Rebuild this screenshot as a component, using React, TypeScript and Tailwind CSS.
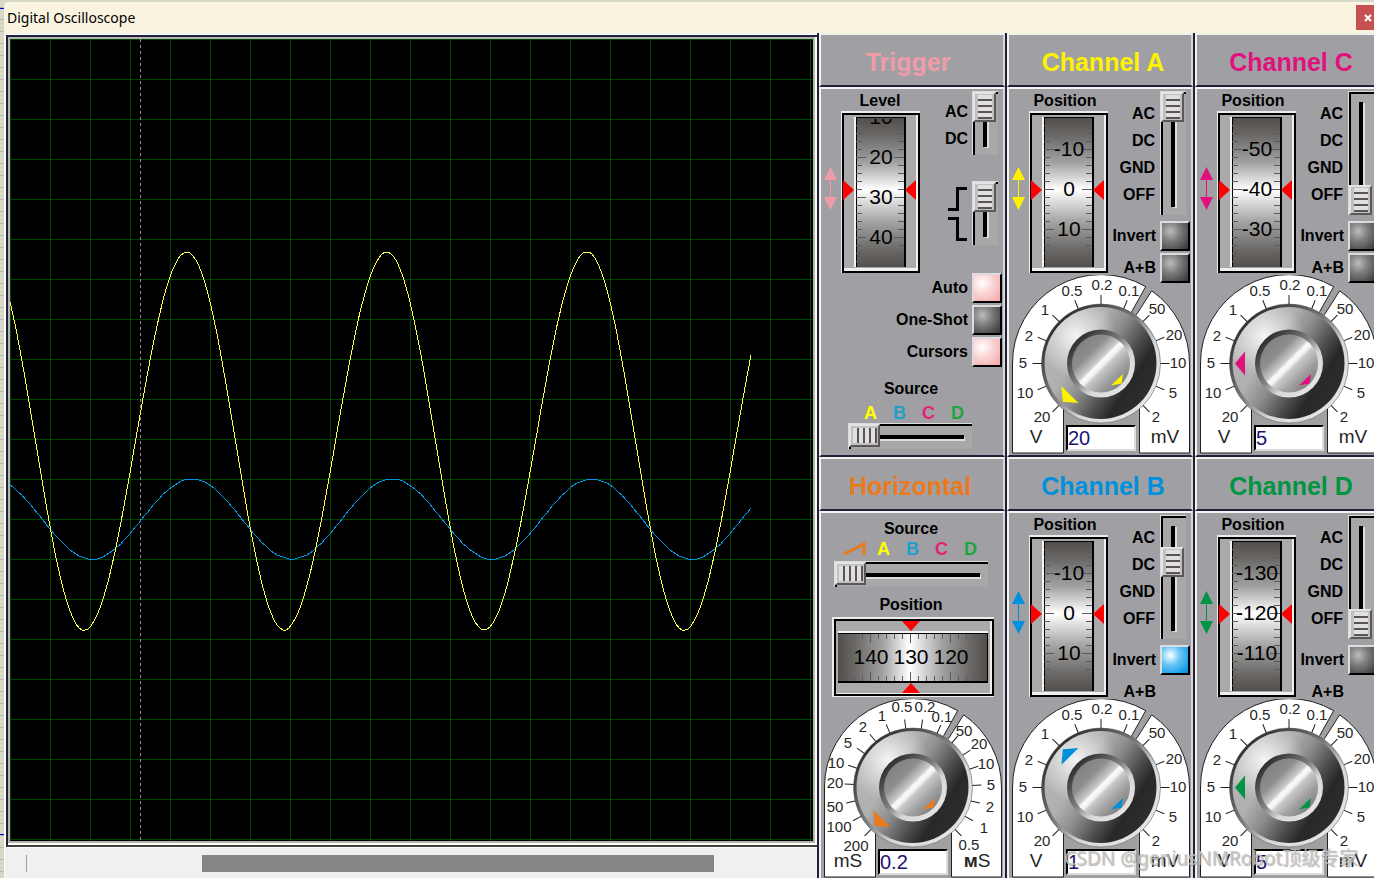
import { useId, useState } from "react";
import type { ReactNode } from "react";
import clsx from "clsx";

type Led = "off" | "pink" | "blue";

interface Mark {
  text: string;
  x: number;
  y: number;
  angle: number;
}

interface ChannelProps {
  name: string;
  color: string;
  wheel: number[];
  coupling: number;
  pointer: number;
  volts: string;
  inverted?: boolean;
  canSum?: boolean;
}

const YELLOW = "#fff200";
const BLUE = "#0090dc";
const MAGENTA = "#e0107c";
const GREEN = "#009444";
const ORANGE = "#ea7a1c";
const PINK = "#f09ca8";

const voltMarks: Mark[] = [
  { text: "20", x: 30, y: 142, angle: -135 },
  { text: "10", x: 13, y: 118, angle: -112.5 },
  { text: "5", x: 11, y: 88, angle: -90 },
  { text: "2", x: 17, y: 61, angle: -67.5 },
  { text: "1", x: 33, y: 35, angle: -45 },
  { text: "0.5", x: 60, y: 16, angle: -22.5 },
  { text: "0.2", x: 90, y: 10, angle: 0 },
  { text: "0.1", x: 117, y: 16, angle: 22.5 },
  { text: "50", x: 145, y: 34, angle: 45 },
  { text: "20", x: 162, y: 60, angle: 67.5 },
  { text: "10", x: 166, y: 88, angle: 90 },
  { text: "5", x: 161, y: 118, angle: 112.5 },
  { text: "2", x: 144, y: 142, angle: 135 },
];

const timeMarks: Mark[] = [
  { text: "200", x: 32, y: 147, angle: -135 },
  { text: "100", x: 15, y: 128, angle: -119 },
  { text: "50", x: 11, y: 108, angle: -103 },
  { text: "20", x: 11, y: 84, angle: -87 },
  { text: "10", x: 12, y: 64, angle: -71 },
  { text: "5", x: 24, y: 44, angle: -55 },
  { text: "2", x: 39, y: 28, angle: -39 },
  { text: "1", x: 58, y: 17, angle: -23 },
  { text: "0.5", x: 78, y: 8, angle: -7 },
  { text: "0.2", x: 101, y: 8, angle: 8 },
  { text: "0.1", x: 118, y: 18, angle: 24 },
  { text: "50", x: 140, y: 32, angle: 41 },
  { text: "20", x: 155, y: 45, angle: 57 },
  { text: "10", x: 162, y: 65, angle: 72 },
  { text: "5", x: 167, y: 86, angle: 88 },
  { text: "2", x: 166, y: 108, angle: 103 },
  { text: "1", x: 160, y: 129, angle: 119 },
  { text: "0.5", x: 145, y: 146, angle: 135 },
];

function wave(mid: number, amp: number, peak: number, fall: number) {
  const points: string[] = [];
  for (let x = 0; x <= 741; x += 3) {
    const t = (((x - peak) % 200) + 200) % 200;
    const phase = t < fall ? t / fall / 2 : 0.5 + (t - fall) / (200 - fall) / 2;
    points.push(`${x},${Math.round(mid - amp * Math.cos(phase * 2 * Math.PI))}`);
  }
  return points.join(" ");
}

function Screen() {
  return (
    <div className="flex min-h-0 flex-1 border-t border-l border-white">
      <div className="flex flex-1 border-t-2 border-l-2 border-b-2 border-t-[#20203a] border-l-[#20203a] border-b-[#404040]">
        <div className="flex flex-1 border-r-2 border-b-2 border-[#fffdf4]">
          <div className="flex flex-1 border-2 border-[#b4b4b4]">
            <svg className="h-full w-full bg-black" role="img" aria-label="Traces" shapeRendering="crispEdges">
              <defs>
                <pattern id="graticule" width="40" height="40" patternUnits="userSpaceOnUse">
                  <path d="M0.5 0V40M0 0.5H40" stroke="#004600" fill="none" />
                </pattern>
              </defs>
              <rect width="100%" height="100%" fill="url(#graticule)" />
              <line x1="130.5" x2="130.5" y1="0" y2="100%" stroke="#909090" strokeDasharray="3 3" />
              <polyline points={wave(480, 40, 182, 100)} fill="none" stroke="#0096e6" />
              <polyline points={wave(402, 189, 177, 97)} fill="none" stroke="#ffff50" />
            </svg>
          </div>
        </div>
      </div>
    </div>
  );
}

function Panel({ title, color, shift, children }: { title: string; color: string; shift: string; children: ReactNode }) {
  return (
    <section className="flex h-[424px] shrink-0 flex-col">
      <header
        className={clsx(
          "flex h-[54px] shrink-0 items-center justify-center border-2 border-t-[#eef4ea] border-r-[#d8d8d8] border-b-[#20203a] border-l-[#f4f4ee] pt-1",
          shift
        )}
      >
        <h2 className="text-[25px] leading-7 font-bold" style={{ color }}>
          {title}
        </h2>
      </header>
      <div className="min-h-0 flex-1 border-2 border-t-[#f4f4ee] border-r-[#d8d8d8] border-b-[#20203a] border-l-[#f4f4ee] pr-px pl-[3px]">
        {children}
      </div>
    </section>
  );
}

function LedButton({ label, led }: { label: string; led: Led }) {
  const [pressed, setPressed] = useState(led !== "off");
  return (
    <button
      type="button"
      aria-label={label}
      aria-pressed={pressed}
      onClick={() => setPressed(!pressed)}
      className={clsx(
        "size-[30px] shrink-0 border-2 border-t-[#dcdcdc] border-r-black border-b-black border-l-[#dcdcdc]",
        led === "off" && "bg-[radial-gradient(circle_at_32%_32%,#bdbdbd,#7c7c7c_40%,#383838_95%)]",
        led === "pink" && "bg-[radial-gradient(circle_at_32%_32%,#ffffff,#fbd2d2_45%,#f4a4a4_100%)]",
        led === "blue" && "bg-[radial-gradient(circle_at_32%_32%,#ffffff,#66c4f6_40%,#0090e4_95%)]"
      )}
    />
  );
}

function LedRow({ label, led }: { label: string; led?: Led }) {
  return (
    <div className="flex h-[30px] items-center justify-end gap-1">
      <span>{label}</span>
      {led ? <LedButton label={label} led={led} /> : <span className="w-[30px] shrink-0" />}
    </div>
  );
}

function VSlider({ label, steps, value, size }: { label: string; steps: number; value: number; size: string }) {
  return (
    <div className={clsx("relative mr-1 w-[26px] shrink-0 border-t border-l border-[#dcdcdc] bg-[#a8a8a8]", size)}>
      <div className="h-full border-t-2 border-l-2 border-black px-2 py-2">
        <div className="h-full w-1 bg-black shadow-[2px_1px_0_#dedede]" />
      </div>
      <input
        type="range"
        aria-label={label}
        min={0}
        max={steps - 1}
        defaultValue={value}
        className="absolute inset-0 m-0 h-full w-[23px] appearance-none bg-transparent [writing-mode:vertical-lr] [&::-webkit-slider-thumb]:h-[30px] [&::-webkit-slider-thumb]:w-[23px] [&::-webkit-slider-thumb]:appearance-none [&::-webkit-slider-thumb]:border-2 [&::-webkit-slider-thumb]:border-t-[#e4e4e4] [&::-webkit-slider-thumb]:border-r-[#5c5858] [&::-webkit-slider-thumb]:border-b-[#5c5858] [&::-webkit-slider-thumb]:border-l-[#e4e4e4] [&::-webkit-slider-thumb]:bg-[#c0c0c0] [&::-webkit-slider-thumb]:bg-[repeating-linear-gradient(180deg,#e0e0e0_0_4px,#5c5454_4px_6px)] [&::-webkit-slider-thumb]:bg-[length:14px_24px] [&::-webkit-slider-thumb]:bg-center [&::-webkit-slider-thumb]:bg-no-repeat"
      />
    </div>
  );
}

function HSlider({ label, steps, size }: { label: string; steps: number; size: string }) {
  return (
    <div className={clsx("relative h-[26px] border-t border-l border-[#dcdcdc] bg-[#a8a8a8]", size)}>
      <div className="h-full border-t-2 border-l-2 border-black px-2 py-[9px]">
        <div className="h-1 w-full bg-black shadow-[1px_2px_0_#dedede]" />
      </div>
      <input
        type="range"
        aria-label={label}
        min={0}
        max={steps - 1}
        defaultValue={0}
        className="absolute inset-0 m-0 h-[23px] w-full appearance-none bg-transparent [&::-webkit-slider-thumb]:h-[23px] [&::-webkit-slider-thumb]:w-[31px] [&::-webkit-slider-thumb]:appearance-none [&::-webkit-slider-thumb]:border-2 [&::-webkit-slider-thumb]:border-t-[#e4e4e4] [&::-webkit-slider-thumb]:border-r-[#5c5858] [&::-webkit-slider-thumb]:border-b-[#5c5858] [&::-webkit-slider-thumb]:border-l-[#e4e4e4] [&::-webkit-slider-thumb]:bg-[#c0c0c0] [&::-webkit-slider-thumb]:bg-[repeating-linear-gradient(90deg,#e0e0e0_0_4px,#5c5454_4px_6px)] [&::-webkit-slider-thumb]:bg-[length:24px_15px] [&::-webkit-slider-thumb]:bg-center [&::-webkit-slider-thumb]:bg-no-repeat"
      />
    </div>
  );
}

// numbers are 40px apart, the one at values.length / 2 sits on the center line
function VWheel({ label, values, center = 78 }: { label: string; values: number[]; center?: number }) {
  const id = useId();
  const start = center - 40 * Math.floor(values.length / 2);
  const ticks: number[] = [];
  for (let y = center - 80; y < 156; y += 8) {
    if (y > 6) ticks.push(y);
  }
  return (
    <div className="relative">
      <svg width="80" height="162" className="block">
        <defs>
          <linearGradient id={`${id}g`} x1="0" y1="0" x2="0" y2="1">
            <stop offset="0" stopColor="#524e4c" />
            <stop offset="0.12" stopColor="#6c6a68" />
            <stop offset="0.3" stopColor="#a2a2a2" />
            <stop offset="0.48" stopColor="#ffffff" />
            <stop offset="0.7" stopColor="#a2a2a2" />
            <stop offset="0.88" stopColor="#6c6a68" />
            <stop offset="1" stopColor="#524e4c" />
          </linearGradient>
          <clipPath id={`${id}c`}>
            <rect x="16" y="8" width="50" height="147" />
          </clipPath>
        </defs>
        <g shapeRendering="crispEdges">
          <rect x="1" y="0" width="79" height="162" fill="#ececec" />
          <rect x="2" y="2" width="78" height="160" fill="#000" />
          <rect x="4" y="4" width="74" height="156" fill="#f0f0f0" />
          <rect x="4" y="4" width="72" height="153" fill="#aaaaaa" />
          <rect x="14" y="6" width="2" height="150" fill="#f4f4f4" />
          <rect x="16" y="6" width="50" height="150" fill="#000" />
          <rect x="17" y="7" width="47" height="149" fill={`url(#${id}g)`} />
          {ticks.map((y) => {
            const len = (y - center) % 40 === 0 ? 10 : 6;
            return <path key={y} d={`M16 ${y + 0.5}h${len}M64 ${y + 0.5}h-${len}`} stroke="#5a5a5a" />;
          })}
        </g>
        <path d="M3 69V89L14 79ZM76 69V89L65 79Z" fill="#ff0000" />
        <g clipPath={`url(#${id}c)`} fontSize="21" textAnchor="middle">
          {values.map((v, i) => (
            <text key={v} x="41" y={start + i * 40 + 7}>
              {v}
            </text>
          ))}
        </g>
      </svg>
      <input type="range" aria-label={label} min={-200} max={200} className="absolute inset-0 h-full w-full opacity-0" />
    </div>
  );
}

function HWheel({ label, values }: { label: string; values: number[] }) {
  const id = useId();
  const ticks = Array.from({ length: 17 }, (_, i) => 15 + i * 8);
  return (
    <div className="relative">
      <svg width="162" height="80" className="block">
        <defs>
          <linearGradient id={id}>
            <stop offset="0" stopColor="#524e4c" />
            <stop offset="0.12" stopColor="#6c6a68" />
            <stop offset="0.3" stopColor="#a2a2a2" />
            <stop offset="0.48" stopColor="#ffffff" />
            <stop offset="0.7" stopColor="#a2a2a2" />
            <stop offset="0.88" stopColor="#6c6a68" />
            <stop offset="1" stopColor="#524e4c" />
          </linearGradient>
        </defs>
        <g shapeRendering="crispEdges">
          <rect width="162" height="80" fill="#ececec" />
          <rect x="2" y="2" width="160" height="77" fill="#000" />
          <rect x="4" y="4" width="156" height="73" fill="#f0f0f0" />
          <rect x="4" y="4" width="154" height="72" fill="#aaaaaa" />
          <rect x="6" y="14" width="150" height="2" fill="#f4f4f4" />
          <rect x="6" y="16" width="150" height="50" fill="#000" />
          <rect x="6" y="17" width="149" height="47" fill={`url(#${id})`} />
          {ticks.map((x) => {
            const len = (x - 79) % 40 === 0 ? 9 : 5;
            return <path key={x} d={`M${x - 0.5} 17v${len}M${x - 0.5} 64v-${len}`} stroke="#5a5a5a" />;
          })}
        </g>
        <path d="M70 4H88L79 14ZM70 76H88L79 66Z" fill="#ff0000" />
        <g fontSize="21" textAnchor="middle">
          {values.map((v, i) => (
            <text key={v} x={39 + i * 40} y="47">
              {v}
            </text>
          ))}
        </g>
      </svg>
      <input type="range" aria-label={label} min={0} max={200} className="absolute inset-0 h-full w-full opacity-0" />
    </div>
  );
}

interface DialProps {
  label: string;
  marks: Mark[];
  pointer: number;
  color: string;
  value: string;
  units: [ReactNode, ReactNode];
}

function Dial({ label, marks, pointer, color, value, units }: DialProps) {
  const id = useId();
  return (
    <div className="relative w-[178px]">
      <svg width="178" height="179" className="block">
        <defs>
          <linearGradient id={`${id}body`} x1="0.1" y1="0.2" x2="0.9" y2="0.72">
            <stop offset="0" stopColor="#b4b4b4" />
            <stop offset="0.3" stopColor="#b0b0b0" />
            <stop offset="0.5" stopColor="#8c8c8c" />
            <stop offset="0.72" stopColor="#4c4c4c" />
            <stop offset="0.86" stopColor="#282828" />
            <stop offset="1" stopColor="#2c2c2c" />
          </linearGradient>
          <radialGradient id={`${id}shine`} cx="0.28" cy="0.26" r="0.36">
            <stop offset="0" stopColor="#f4f4f4" />
            <stop offset="1" stopColor="#f4f4f4" stopOpacity="0" />
          </radialGradient>
          <linearGradient id={`${id}rim`} x1="0.15" y1="0.15" x2="0.85" y2="0.85">
            <stop offset="0" stopColor="#303030" />
            <stop offset="0.45" stopColor="#808080" />
            <stop offset="0.7" stopColor="#d8d8d8" />
            <stop offset="1" stopColor="#e4e4e4" />
          </linearGradient>
          <linearGradient id={`${id}cap`} x1="0.15" y1="0.15" x2="0.85" y2="0.85">
            <stop offset="0" stopColor="#828282" />
            <stop offset="0.24" stopColor="#8e8e8e" />
            <stop offset="0.36" stopColor="#b4b4b4" />
            <stop offset="0.43" stopColor="#c8c8c8" />
            <stop offset="0.48" stopColor="#fafafa" />
            <stop offset="0.54" stopColor="#f4f4f4" />
            <stop offset="0.6" stopColor="#c8c8c8" />
            <stop offset="0.8" stopColor="#a0a0a0" />
            <stop offset="1" stopColor="#848484" />
          </linearGradient>
        </defs>
        <path
          d="M0.5 178V89A88.5 88.5 0 0 1 133.7 11.7L119.7 36.7L89 88L51.5 134V178Z M139.7 15.8A88.5 88.5 0 0 1 177.5 89V178H127.5V134L89 88L124.7 39.3Z"
          fill="#fff"
          stroke="#202020"
        />
        {marks.map((m) => (
          <line key={m.angle} x1="89" y1="20" x2="89" y2="30" stroke="#202020" transform={`rotate(${m.angle} 89 88.5)`} />
        ))}
        <g fontSize="15" textAnchor="middle" fill="#262626">
          {marks.map((m) => (
            <text key={m.angle} x={m.x} y={m.y + 5}>
              {m.text}
            </text>
          ))}
        </g>
        <g fontSize="19" textAnchor="middle" fill="#262626">
          <text x="24" y="168">
            {units[0]}
          </text>
          <text x="153" y="168">
            {units[1]}
          </text>
        </g>
        <path d="M52 134V177H127V134Z" fill="#a0a0a0" />
        <circle cx="89" cy="88.5" r="59.5" fill={`url(#${id}rim)`} stroke="#4a4a4a" strokeWidth="0.5" />
        <circle cx="88.5" cy="88" r="56" fill={`url(#${id}body)`} />
        <circle cx="88.5" cy="88" r="56" fill={`url(#${id}shine)`} />
        <circle cx="89" cy="88.5" r="34" fill={`url(#${id}rim)`} />
        <circle cx="89" cy="88.5" r="29" fill={`url(#${id}cap)`} />
        <path d="M35 88.5L45 76.5V100.5Z" fill={color} transform={`rotate(${pointer} 89 88.5)`} />
        <path d="M111 99L109.5 108.5L99 110.5Z" fill={color} />
      </svg>
      <input
        type="range"
        aria-label={label}
        min={-135}
        max={135}
        className="absolute top-8 left-8 size-28 rounded-full opacity-0"
      />
      <input
        type="text"
        aria-label={`${label} value`}
        defaultValue={value}
        className="absolute bottom-[3px] left-[54px] h-[26px] w-[70px] border-2 border-t-black border-r-[#dcdcdc] border-b-[#dcdcdc] border-l-black bg-white text-xl leading-5 text-[#1c1470] outline-none"
      />
    </div>
  );
}

function ShiftArrow({ color }: { color: string }) {
  return (
    <div className="w-4 shrink-0 pt-[78px]">
      <svg width="13" height="44" fill={color}>
        <path d="M6.5 0L13 13H7V30H13L6.5 43L0 30H6V13H0Z" />
      </svg>
    </div>
  );
}

function Channel({ name, color, wheel, coupling, pointer, volts, inverted, canSum }: ChannelProps) {
  return (
    <Panel title={`Channel ${name}`} color={color} shift="pl-1.5">
      <div className="flex h-[186px]">
        <ShiftArrow color={color} />
        <div className="w-20 shrink-0">
          <h3 className="flex h-[22px] items-end justify-center pr-1.5">Position</h3>
          <VWheel label={`Channel ${name} position`} values={wheel} />
        </div>
        <div className="flex-1 pt-0.5">
          <div className="flex justify-end gap-1">
            <ul className="pt-[9px] pr-px text-right leading-[27px]">
              <li>AC</li>
              <li>DC</li>
              <li>GND</li>
              <li>OFF</li>
            </ul>
            <VSlider label={`Channel ${name} coupling`} steps={4} value={coupling} size="h-[124px]" />
          </div>
          <div className="mt-1.5 flex flex-col gap-0.5">
            <LedRow label="Invert" led={inverted ? "blue" : "off"} />
            <LedRow label="A+B" led={canSum ? "off" : undefined} />
          </div>
        </div>
      </div>
      <Dial
        label={`Channel ${name} gain`}
        marks={voltMarks}
        pointer={pointer}
        color={color}
        value={volts}
        units={["V", "mV"]}
      />
    </Panel>
  );
}

function SourceLetters() {
  return (
    <>
      <span className="w-[29px] text-center text-[#ffff00]">A</span>
      <span className="w-[29px] text-center text-[#1ea0c8]">B</span>
      <span className="w-[29px] text-center text-[#e81e78]">C</span>
      <span className="w-[29px] text-center text-[#1ea53c]">D</span>
    </>
  );
}

function Trigger() {
  return (
    <Panel title="Trigger" color={PINK} shift="pr-2">
      <div className="flex h-[184px]">
        <ShiftArrow color={PINK} />
        <div className="w-20 shrink-0">
          <h3 className="flex h-[22px] items-end justify-center">Level</h3>
          <VWheel label="Trigger level" values={[10, 20, 30, 40]} center={86} />
        </div>
        <div className="flex-1 pt-0.5">
          <div className="flex justify-end gap-1">
            <ul className="pt-[7px] text-right leading-[27px]">
              <li>AC</li>
              <li>DC</li>
            </ul>
            <VSlider label="Trigger coupling" steps={2} value={0} size="h-16" />
          </div>
          <div className="mt-[26px] flex items-center justify-end gap-1">
            <svg width="20" height="56" fill="none" stroke="#000" strokeWidth="3" shapeRendering="crispEdges">
              <path d="M19 3.5H9.5V24.5H0M0 33.5H9.5V54.5H19" />
            </svg>
            <VSlider label="Trigger edge" steps={2} value={0} size="h-16" />
          </div>
        </div>
      </div>
      <div className="flex flex-col gap-0.5">
        <LedRow label="Auto" led="pink" />
        <LedRow label="One-Shot" led="off" />
        <LedRow label="Cursors" led="pink" />
      </div>
      <h3 className="mt-3 pr-1 text-center leading-5">Source</h3>
      <div className="mt-1 ml-8 flex text-lg leading-5">
        <SourceLetters />
      </div>
      <div className="ml-6">
        <HSlider label="Trigger source" steps={4} size="w-[124px]" />
      </div>
    </Panel>
  );
}

function Horizontal() {
  return (
    <Panel title="Horizontal" color={ORANGE} shift="pr-1">
      <div className="h-[186px] pt-1.5">
        <h3 className="pr-1 text-center leading-5">Source</h3>
        <div className="ml-4 flex text-lg leading-5">
          <span className="flex w-[29px] items-center justify-center">
            <svg width="24" height="14" fill="none" stroke={ORANGE} strokeWidth="3">
              <path d="M1 12L21 2V13" />
            </svg>
          </span>
          <SourceLetters />
        </div>
        <div className="mt-0.5 ml-2.5">
          <HSlider label="Horizontal source" steps={5} size="w-[154px]" />
        </div>
        <h3 className="mt-2 pr-1 text-center leading-5">Position</h3>
        <div className="mt-0.5 ml-2">
          <HWheel label="Horizontal position" values={[140, 130, 120]} />
        </div>
      </div>
      <Dial
        label="Time base"
        marks={timeMarks}
        pointer={-45}
        color={ORANGE}
        value="0.2"
        units={[
          "mS",
          <>
            <tspan fontWeight="bold">м</tspan>S
          </>,
        ]}
      />
    </Panel>
  );
}

function Column({ children }: { children: ReactNode }) {
  return <div className="w-[188px] shrink-0 border-l-2 border-[#20203a] bg-[#a0a0a4]">{children}</div>;
}

export default function App() {
  return (
    <div className="relative flex h-screen flex-col overflow-hidden bg-[repeating-linear-gradient(180deg,#d8d8c8_0_7px,#b8b8b0_7px_8px,#d8d8c8_8px_12px)] pt-0.5 pl-1 font-['Liberation_Sans',Arial,sans-serif] text-black">
      <div className="absolute top-2 left-0 h-px w-1 bg-[#0000c8]" />
      <div className="absolute bottom-[43px] left-0 h-px w-1 bg-[#0000c8]" />
      <div className="flex h-[31px] shrink-0 items-center justify-between rounded-tl bg-[#faf3e0] pl-[3px]">
        <h1 className="font-['Noto_Sans',sans-serif] text-sm">Digital Oscilloscope</h1>
        <button
          type="button"
          aria-label="Close"
          className="flex h-[25px] w-[18px] items-center justify-end bg-[#c75050] pr-0.5"
        >
          <svg width="8" height="8" stroke="#fff" strokeWidth="2">
            <path d="M1 1L7 7M7 1L1 7" />
          </svg>
        </button>
      </div>
      <div className="flex min-h-0 flex-1 border-l border-[#fffdf0] bg-[#f0f0f0]">
        <main className="flex min-w-0 flex-1 flex-col pt-px">
          <Screen />
          <div className="flex h-[31px] shrink-0 items-center border-t border-white">
            <div className="ml-[21px] h-[17px] w-px bg-[#a0a0a0]" />
            <div className="ml-[21.6%] h-[17px] w-[63%] bg-[#868686]" />
          </div>
        </main>
        <aside className="-mr-[7px] flex shrink-0 text-base leading-5 font-bold [&_input]:font-normal [&_svg]:font-normal">
          <Column>
            <Trigger />
            <Horizontal />
          </Column>
          <Column>
            <Channel name="A" color={YELLOW} wheel={[-10, 0, 10]} coupling={0} pointer={-45} volts="20" canSum />
            <Channel name="B" color={BLUE} wheel={[-10, 0, 10]} coupling={1} pointer={45} volts="1" inverted />
          </Column>
          <Column>
            <Channel name="C" color={MAGENTA} wheel={[-50, -40, -30]} coupling={3} pointer={0} volts="5" canSum />
            <Channel name="D" color={GREEN} wheel={[-130, -120, -110]} coupling={3} pointer={0} volts="5" />
          </Column>
        </aside>
      </div>
      <p className="pointer-events-none absolute right-4 bottom-2 font-['Noto_Sans','Noto_Sans_CJK_SC',sans-serif] text-[19px] leading-6 text-[#c4c4c4]/85 [text-shadow:1px_1px_1px_#70707080]">
        CSDN @geniusNMRobot顶级专家
      </p>
    </div>
  );
}
